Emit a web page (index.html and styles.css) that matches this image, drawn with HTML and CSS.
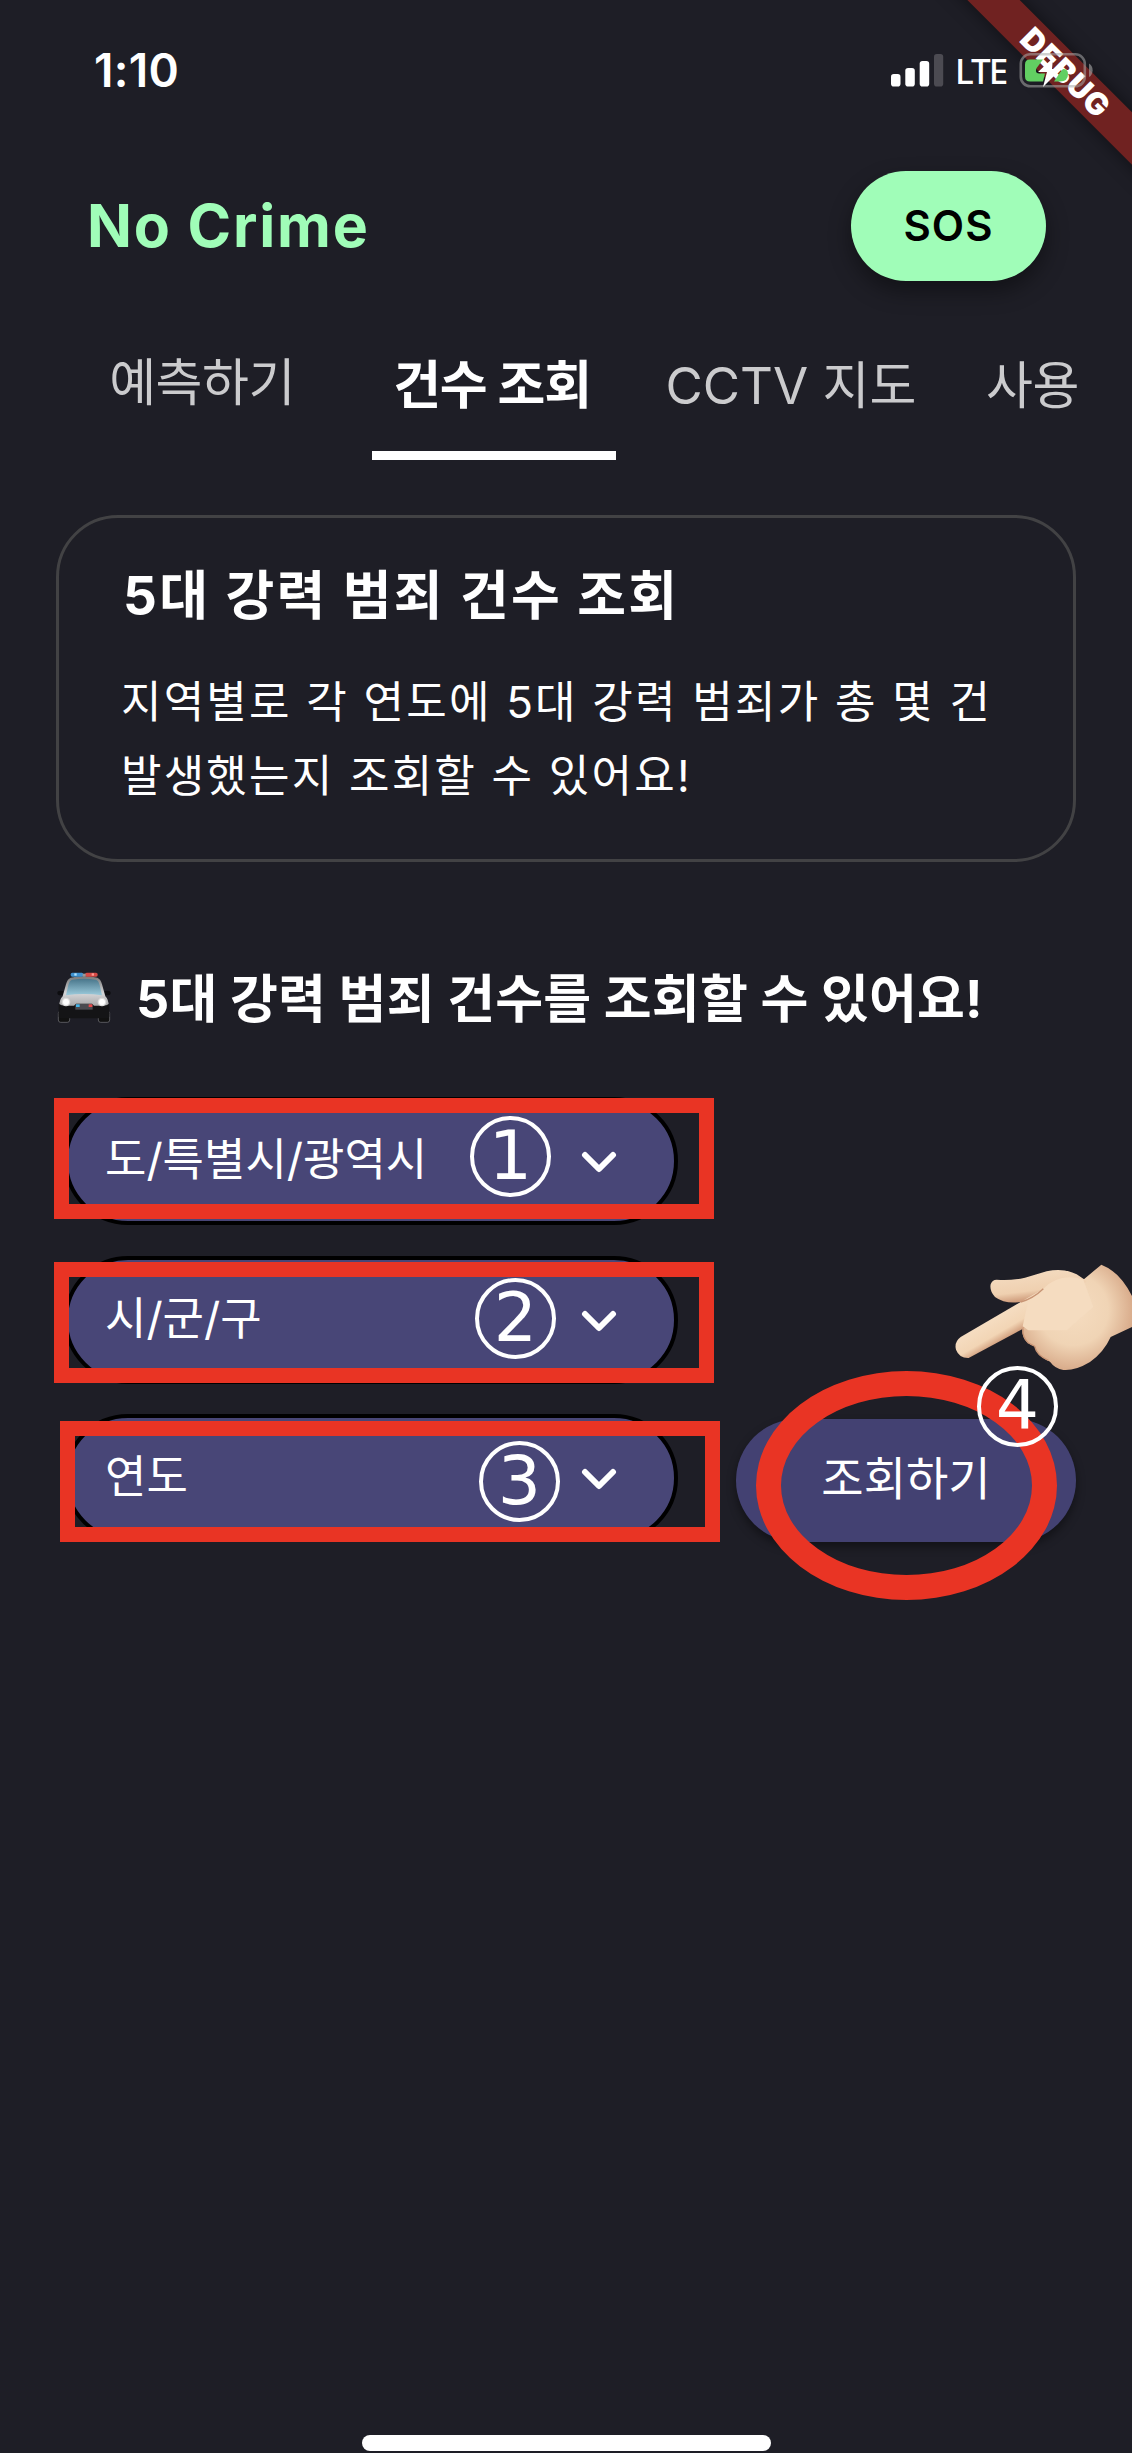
FILE: index.html
```html
<!DOCTYPE html>
<html lang="ko">
<head>
<meta charset="utf-8">
<title>No Crime</title>
<link rel="stylesheet" href="styles.css">
</head>
<body>
<div class="screen">
  <div class="debug-band"><span>DEBUG</span></div>
  <div class="status">
    <span class="time">1:10</span>
    <div class="status-right">
      <svg class="signal" width="53" height="33" viewBox="0 0 53 33">
        <rect x="0" y="20" width="9.5" height="12.5" rx="2.8" fill="#fff"/>
        <rect x="14.3" y="14" width="9.5" height="18.5" rx="2.8" fill="#fff"/>
        <rect x="28.7" y="7" width="9.5" height="25.5" rx="2.8" fill="#fff"/>
        <rect x="43" y="0" width="9.2" height="32.5" rx="2.8" fill="#4c4b52"/>
      </svg>
      <span class="lte">LTE</span>
      <svg class="battery" width="76" height="40" viewBox="0 0 76 40">
        <rect x="1.8" y="4.3" width="64" height="32" rx="9.5" fill="none" stroke="#aaa" stroke-opacity=".55" stroke-width="2.6"/>
        <path d="M70 13.5q3.6 2 3.6 6.800t-3.600 6.800z" fill="#aaa" fill-opacity=".6"/>
        <path d="M11 9.500h13l-6 8c-2 3-1 6 2 6h6l-2 8H11q-5 0-5-5v-12q0-5 5-5z" fill="#62cf62"/>
        <path d="M44 19q5 0 5 5 0 7.500-8 7.500h-6l6-9z" fill="#62cf62"/>
        <path d="M34 8L19 22h9l-4 15 18-18h-9z" fill="#fff"/>
      </svg>
    </div>
  </div>

  <header class="header">
    <h1 class="brand">No Crime</h1>
    <button class="sos">SOS</button>
  </header>

  <nav class="tabs">
    <span class="tab tab-predict">예측하기</span>
    <span class="tab tab-active">건수 조회</span>
    <span class="tab tab-cctv">CCTV 지도</span>
    <span class="tab tab-use">사용</span>
  </nav>

  <section class="card">
    <h2 class="card-title">5대 강력 범죄 건수 조회</h2>
    <p class="card-text">지역별로 각 연도에 5대 강력 범죄가 총 몇 건<br>발생했는지 조회할 수 있어요!</p>
  </section>

  <div class="prompt">
    <svg class="car" width="56" height="54" viewBox="0 0 168 162">
      <defs>
        <linearGradient id="glass" x1="0" y1="0" x2="0" y2="1"><stop offset="0" stop-color="#48758a"/><stop offset="1" stop-color="#9ccbdc"/></linearGradient>
        <linearGradient id="body" x1="0" y1="0" x2="0" y2="1"><stop offset="0" stop-color="#777"/><stop offset=".5" stop-color="#d5d5d7"/><stop offset="1" stop-color="#999"/></linearGradient>
      </defs>
      <rect x="7" y="120" width="34" height="34" rx="7" fill="#111" stroke="#77777b" stroke-width="2"/>
      <rect x="127" y="120" width="34" height="34" rx="7" fill="#111" stroke="#77777b" stroke-width="2"/>
      <ellipse cx="14" cy="66" rx="10" ry="7" fill="#0d0d10"/><ellipse cx="154" cy="66" rx="10" ry="7" fill="#0d0d10"/>
      <path d="M44 20q40-8 80 0 10 4 14 20l10 36q10 10 10 28v14H10v-14q0-18 10-28l10-36q4-16 14-20z" fill="url(#body)"/>
      <path d="M48 26q36-6 72 0 8 3 11 16l7 31q-54-8-108 0l7-31q3-13 11-16z" fill="url(#glass)"/>
      <path d="M8 98q8 6 20 6h26l6-6h48l6 6h26q12 0 20-6v38q0 6-6 6H14q-6 0-6-6z" fill="#141416"/>
      <circle cx="30" cy="93" r="13" fill="#ddd"/><circle cx="30" cy="93" r="9" fill="#fff"/>
      <circle cx="138" cy="93" r="13" fill="#ddd"/><circle cx="138" cy="93" r="9" fill="#fff"/>
      <rect x="58" y="99" width="52" height="17" fill="#4b4b50"/>
      <rect x="60" y="100" width="11" height="8" fill="#45b5e8"/><rect x="98" y="100" width="11" height="8" fill="#e84b4b"/>
      <rect x="44" y="5" width="38" height="12" rx="5" fill="#3e91cf"/><rect x="87" y="5" width="38" height="12" rx="5" fill="#d64a46"/>
      <rect x="55" y="7" width="7" height="7" fill="#b0e4ff"/><rect x="107" y="7" width="7" height="7" fill="#ff9a90"/><rect x="80" y="8" width="9" height="9" fill="#999"/>
    </svg>
    <h2 class="prompt-text">5대 강력 범죄 건수를 조회할 수 있어요!</h2>
  </div>

  <div class="form">
    <div class="selects">
      <div class="select"><span>도/특별시/광역시</span><svg class="chev" width="36" height="24" viewBox="0 0 36 24"><path d="M4 5l14 14L32 5"/></svg>
        <i class="frame"></i><b class="num num-1">1</b></div>
      <div class="select"><span>시/군/구</span><svg class="chev" width="36" height="24" viewBox="0 0 36 24"><path d="M4 5l14 14L32 5"/></svg>
        <i class="frame frame-2"></i><b class="num num-2">2</b></div>
      <div class="select"><span>연도</span><svg class="chev" width="36" height="24" viewBox="0 0 36 24"><path d="M4 5l14 14L32 5"/></svg>
        <i class="frame frame-3"></i><b class="num num-3">3</b></div>
    </div>
    <button class="submit">조회하기
      <i class="ring"></i>
      <b class="num num-4">4</b>
    </button>
  </div>

  <svg class="hand" width="182" height="110" viewBox="750 125 546 330">
    <defs>
      <radialGradient id="palm" gradientUnits="userSpaceOnUse" cx="1120" cy="270" r="210"><stop offset="0" stop-color="#f5dcc0"/><stop offset=".5" stop-color="#f0d4b5"/><stop offset="1" stop-color="#cf9b7a"/></radialGradient>
      <linearGradient id="finger" gradientUnits="userSpaceOnUse" x1="860" y1="310" x2="895" y2="370"><stop offset="0" stop-color="#f5dcc0"/><stop offset=".6" stop-color="#f2d5b5"/><stop offset="1" stop-color="#cf9b7a"/></linearGradient>
      <linearGradient id="thumb" gradientUnits="userSpaceOnUse" x1="930" y1="170" x2="940" y2="250"><stop offset="0" stop-color="#f3d9bd"/><stop offset=".6" stop-color="#efd0b0"/><stop offset="1" stop-color="#c99372"/></linearGradient>
    </defs>
    <path d="M962 245L1030 200 1150 178 1204 133Q1262 155 1300 235V318L1232 350Q1212 395 1170 425 1125 452 1090 449 1065 445 1050 424 1012 408 1004 378 975 370 969 345 965 330 968 322z" fill="url(#palm)"/>
    <path d="M890 178Q930 182 975 172L1040 153Q1090 142 1130 162L1160 182 1120 230 1030 205Q1000 232 962 245 915 252 885 230 868 212 872 192 876 178 890 178z" fill="url(#thumb)"/>
    <path d="M962 245L782 350Q762 365 768 388 778 414 806 413L968 326 1010 300 1070 210 1040 200z" fill="url(#finger)"/>
    <path d="M1030 205Q1080 155 1150 178L1180 260 1100 330 985 330 968 318 985 240z" fill="#f5dcc0"/>
    <path d="M962 245Q1000 234 1030 205M969 325Q966 350 985 368 1000 375 1004 378 1010 405 1045 420" fill="none" stroke="#c89474" stroke-width="4"/>
  </svg>
  <div class="home-bar"></div>
</div>
</body>
</html>
```
FILE: styles.css
```css
* { box-sizing: border-box; }
body { margin: 0; background: #1e1e26; }
h1, h2, p { margin: 0; }
button { border: 0; padding: 0; font: inherit; }
.screen {
  position: relative;
  width: 1132px;
  height: 2453px;
  overflow: hidden;
  display: flex;
  flex-direction: column;
  background: #1e1e26;
  color: #fff;
  font-family: Inter, "Noto Sans CJK KR", sans-serif;
}
.debug-band {
  position: absolute;
  left: 866px;
  top: 54px;
  width: 400px;
  height: 37px;
  background: #702221;
  box-shadow: 0 0 18px rgba(0, 0, 0, .5);
  transform: rotate(45deg);
  text-align: center;
  font-size: 31px;
  font-weight: 900;
  line-height: 37px;
  letter-spacing: .8px;
}
.status {
  position: relative;
  display: flex;
  justify-content: space-between;
  height: 171px;
  padding: 50px 37px 0 94px;
}
.time { font-size: 46px; font-weight: 600; line-height: 41px; letter-spacing: .3px; }
.status-right { display: flex; align-items: flex-start; height: 40px; }
.signal { margin-top: 4px; }
.lte {
  margin: 3px 0 0 11px;
  width: 64px;
  font-family: "Noto Sans", sans-serif;
  font-size: 35px;
  font-weight: 500;
  line-height: 36px;
  letter-spacing: -2px;
}
.header {
  display: flex;
  justify-content: space-between;
  align-items: center;
  height: 109px;
  padding: 0 86px 0 87px;
}
.brand { color: #a0fdb8; font-size: 59px; font-weight: 650; line-height: 70px; letter-spacing: 1.8px; }
.sos {
  width: 195px;
  height: 110px;
  border-radius: 55px;
  background: #a0fdb8;
  color: #000;
  box-shadow: 0 10px 22px rgba(0, 0, 0, .4);
  font-size: 42px;
  font-weight: 600;
  letter-spacing: 1px;
}
.tabs {
  display: flex;
  height: 180px;
  padding: 68px 50px 0 57px;
  color: #cbcbcd;
  font-size: 51px;
  line-height: 70px;
  letter-spacing: -.5px;
  white-space: nowrap;
}
.tab { height: 112px; text-align: center; }
.tab-predict { width: 290px; margin: 0 25px 0 0; }
.tab-active { width: 244px; padding: 3px 4px 0 0; border-bottom: 9px solid #fff; color: #fff; font-size: 52px; font-weight: 700; letter-spacing: -1.2px; }
.tab-cctv { width: 350px; padding-top: 3px; letter-spacing: 0; }
.tab-use { width: 116px; padding: 3px 0 0 20px; text-align: left; }
.card {
  width: 1020px;
  height: 347px;
  margin: 55px 0 0 56px;
  padding: 46px 0 0 62px;
  border: 3px solid #424244;
  border-radius: 62px;
  white-space: nowrap;
}
.card-title { padding-left: 2px; font-size: 53px; line-height: 64px; font-weight: 700; letter-spacing: 2.4px; }
.card-text { margin-top: 38px; font-size: 44px; line-height: 73.500px; letter-spacing: 2.2px; }
.prompt { display: flex; align-items: center; height: 70px; margin: 101px 0 0 56px; }
.prompt-text { margin: -5px 0 0 24px; font-size: 52px; font-weight: 700; letter-spacing: .2px; white-space: nowrap; }
.form {
  display: flex;
  justify-content: space-between;
  align-items: flex-end;
  margin: 64px 56px 0 64px;
}
.selects { display: flex; flex-direction: column; gap: 30.500px; }
.select {
  position: relative;
  display: flex;
  justify-content: space-between;
  align-items: center;
  width: 614px;
  height: 128px;
  padding: 0 57px 0 37px;
  border: 4px solid #000;
  border-radius: 64px;
  background: #484677;
  font-size: 45px;
}
.select span { margin-top: -9px; }
.chev { margin-top: 2px; fill: none; stroke: #fff; stroke-width: 6; stroke-linecap: round; stroke-linejoin: round; }
.frame { position: absolute; left: -14px; top: -3px; width: 660px; height: 121px; border: 15px solid #e93424; }
.frame-2 { top: 2px; }
.frame-3 { left: -8px; top: 3px; }
.num {
  position: absolute;
  width: 81px;
  height: 81px;
  border: 4px solid #fff;
  border-radius: 50%;
  font-family: "DejaVu Sans", sans-serif;
  font-size: 68px;
  font-weight: 400;
  line-height: 71px;
  text-align: center;
}
.num-1 { left: 402px; top: 15px; }
.num-2 { left: 407px; top: 18px; }
.num-3 { left: 411px; top: 23px; }
.num-4 { left: 241px; top: -53px; }
.submit {
  position: relative;
  width: 340px;
  height: 123px;
  padding-bottom: 12px;
  border-radius: 62px;
  background: #434172;
  box-shadow: 0 5px 10px rgba(0, 0, 0, .4);
  color: #fff;
  font-size: 46px;
}
.ring { position: absolute; left: 20px; top: -48px; width: 301px; height: 229px; border: 25px solid #e93424; border-radius: 50%; }
.hand { position: absolute; left: 950px; top: 1262px; }
.home-bar { width: 409px; height: 16px; margin: auto 0 2px 362px; border-radius: 8px; background: #fff; }
```
